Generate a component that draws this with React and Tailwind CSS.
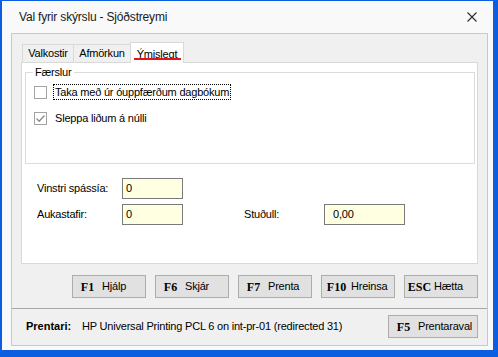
import React from 'react';

const KeyButton = ({ k, label, className = '' }) => (
    <button className={`flex items-center h-[23px] border border-[#adadad] bg-[#e1e1e1] text-black ${className}`}>
        <span className="w-[29px] shrink-0 text-center font-['Liberation_Serif',serif] font-bold text-[12px] tracking-normal">{k}</span>
        <span>{label}</span>
    </button>
);

const CheckBox = ({ checked }) => (
    <div className="w-[13px] h-[13px] shrink-0 border border-[#a3a3a3] bg-white flex items-center justify-center">
        {checked && (
            <svg width="11" height="11" viewBox="0 0 11 11">
                <polyline points="1.5,5.5 4.2,8.2 9.5,2.5" fill="none" stroke="#8a8a8a" strokeWidth="1.3" />
            </svg>
        )}
    </div>
);

const Input = ({ value, className = '' }) => (
    <div className={`h-[21px] border border-[#7a7a7a] bg-[#ffffe1] flex items-center ${className}`}>{value}</div>
);

export default function App() {
    return (
        <div className="w-[498px] h-[357px] flex flex-col bg-[#f9f9f9] border-l-2 border-t border-r-[5px] border-b-[7px] border-[#0b5ee0] text-[11px] tracking-[-0.2px] text-black font-['Liberation_Sans',Arial,sans-serif] overflow-hidden">
            {/* Title bar */}
            <div className="h-[32px] shrink-0 flex items-center justify-between pl-[17px] pr-[16px]">
                <span className="text-[12px] tracking-[-0.18px] text-[#1a1a1a]">Val fyrir skýrslu - Sjóðstreymi</span>
                <svg width="10" height="10" viewBox="0 0 10 10">
                    <path d="M0.5 0.5 L9.5 9.5 M9.5 0.5 L0.5 9.5" stroke="#2b2b2b" strokeWidth="1.1" />
                </svg>
            </div>

            {/* Inner frame */}
            <div className="flex-1 ml-[9px] mr-[5px] mb-[4px] border border-[#c9c9c9] bg-[#f0f0f0] flex flex-col">
                <div className="pt-[8px] px-[9px]">
                    {/* Tabs */}
                    <div className="flex items-end h-[20px] pl-[1px]">
                        <div className="w-[52px] h-[18px] border border-b-0 border-[#d9d9d9] flex items-center justify-center">Valkostir</div>
                        <div className="w-[58px] h-[18px] -ml-px border border-b-0 border-[#d9d9d9] flex items-center justify-center">Afmörkun</div>
                        <div className="relative z-10 w-[54px] h-[21px] -ml-px -mb-px border border-b-0 border-[#d9d9d9] bg-white flex items-start justify-center pt-[3px]">
                            Ýmislegt
                            <div className="absolute left-[3px] top-[15px] w-[47px] h-[2px] bg-[#e3141b]" />
                        </div>
                    </div>

                    {/* Tab panel */}
                    <div className="h-[202px] border border-[#d9d9d9] bg-white flex flex-col">
                        <fieldset className="mt-[3px] ml-[3px] mr-[2px] h-[98px] border border-[#dcdcdc] pl-[8px]">
                            <legend className="ml-[-1px] px-[2px] leading-[13px]">Færslur</legend>
                            <div className="flex items-center h-[16px] mt-[5px]">
                                <CheckBox />
                                <span className="ml-[6px] h-[16px] px-[1px] border border-dotted border-black flex items-center">Taka með úr óuppfærðum dagbókum</span>
                            </div>
                            <div className="flex items-center h-[16px] mt-[10px]">
                                <CheckBox checked />
                                <span className="ml-[8px]">Sleppa liðum á núlli</span>
                            </div>
                        </fieldset>

                        <div className="pl-[15px] mt-[14px] flex items-center">
                            <span className="w-[85px]">Vinstri spássía:</span>
                            <Input value="0" className="w-[61px] pl-[3px]" />
                        </div>
                        <div className="pl-[15px] mt-[5px] flex items-center">
                            <span className="w-[85px]">Aukastafir:</span>
                            <Input value="0" className="w-[61px] pl-[3px]" />
                            <span className="ml-[61px] w-[80px]">Stuðull:</span>
                            <Input value="0,00" className="w-[81px] pl-[8px]" />
                        </div>
                    </div>
                </div>

                {/* Buttons */}
                <div className="mt-[11px] pr-[9px] flex justify-end gap-[9px]">
                    <KeyButton k="F1" label="Hjálp" className="w-[74px]" />
                    <KeyButton k="F6" label="Skjár" className="w-[74px]" />
                    <KeyButton k="F7" label="Prenta" className="w-[74px]" />
                    <KeyButton k="F10" label="Hreinsa" className="w-[74px]" />
                    <KeyButton k="ESC" label="Hætta" className="w-[74px]" />
                </div>

                <div className="mt-[10px] h-px bg-[#a8a8a8]" />

                {/* Printer row */}
                <div className="mt-[6px] flex items-center pl-[14px] pr-[9px]">
                    <span className="w-[56px] font-bold tracking-normal">Prentari:</span>
                    <span>HP Universal Printing PCL 6 on int-pr-01 (redirected 31)</span>
                    <KeyButton k="F5" label="Prentaraval" className="ml-auto w-[90px] pl-[-2px]" />
                </div>
            </div>
        </div>
    );
}
